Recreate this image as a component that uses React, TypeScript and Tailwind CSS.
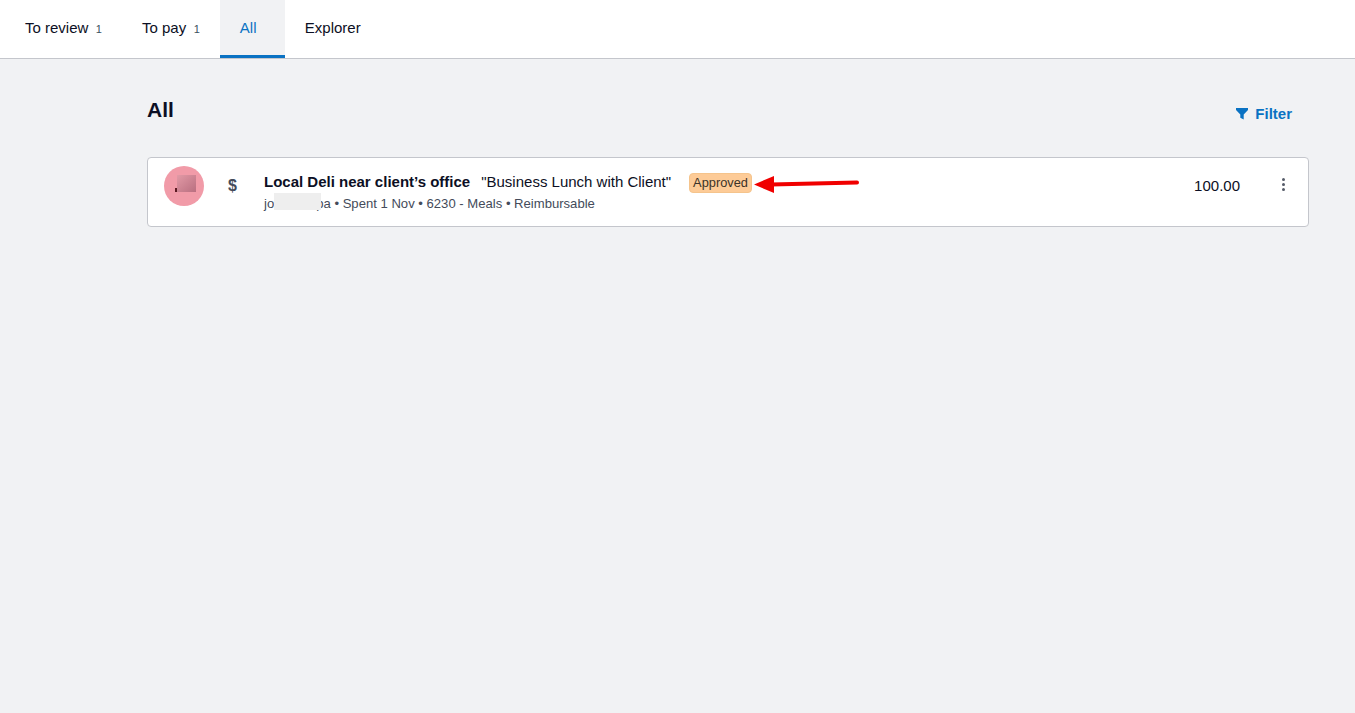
const tabs = [
  { label: 'To review', count: 1 },
  { label: 'To pay', count: 1 },
  { label: 'All', active: true },
  { label: 'Explorer' },
];

const TabBar = () => (
  <nav className="flex h-[59px] border-b border-[#c4c6cc] bg-white pl-[5px]">
    {tabs.map((tab) => (
      <a
        key={tab.label}
        href="#"
        className={
          tab.active
            ? 'flex h-[58px] w-[65px] items-center border-b-[3px] border-[#0a72c3] bg-[#f1f2f4] px-5 pt-[3px] text-[#0a72c3]'
            : 'flex h-[58px] items-center px-5 text-[#0c0f24]'
        }
      >
        <span className="-mt-[2px] text-[15px]">{tab.label}</span>
        {tab.count && <span className="ml-[7.5px] text-[11px] text-[#3a5160]">{tab.count}</span>}
      </a>
    ))}
  </nav>
);

const ExpenseCard = () => (
  <div className="relative flex h-[70px] items-start rounded border border-[#c4c6cc] bg-white">
    <div className="relative ml-4 mt-2 h-10 w-10 shrink-0 rounded-full bg-[#f19ba8]">
      <div className="absolute left-[13px] top-[9px] h-[17px] w-[19px] bg-gradient-to-br from-[#e29aa6] to-[#b96f80]" />
      <div className="absolute left-[11px] top-[22px] h-1 w-[2px] bg-[#5c1a22]" />
    </div>
    <span className="ml-[24px] mt-[18px] w-[9px] shrink-0 text-[16px] font-bold leading-5 text-[#444b5a]">$</span>
    <div className="ml-[27px] mt-[14px] flex-1">
      <div className="flex h-5 items-center text-[15px] text-[#0c0f24]">
        <span className="font-bold">Local Deli near client’s office</span>
        <span className="ml-[11px]">"Business Lunch with Client"</span>
        <span className="ml-[18px] mt-[2px] rounded-sm border border-[#f5c48c] bg-[#fdcb97] px-[3px] text-[12.8px] leading-[18px] text-[#3b3328]">
          Approved
        </span>
      </div>
      <div className="relative mt-1 text-[13.1px] leading-4 text-[#444b5a]">
        jo<span className="inline-block w-[42px]" />pa • Spent 1 Nov • 6230 - Meals • Reimbursable
        <div className="absolute left-[10px] top-[-3px] h-[17px] w-[47px] bg-[#eeeeee] blur-[0.5px]" />
      </div>
    </div>
    <span className="mr-[42px] mt-[17px] text-[15px] text-[#0c0f24]">100.00</span>
    <div className="mr-[23px] mt-[20px] flex flex-col gap-[2px]">
      <span className="h-[3px] w-[3px] rounded-full bg-[#555b68]" />
      <span className="h-[3px] w-[3px] rounded-full bg-[#555b68]" />
      <span className="h-[3px] w-[3px] rounded-full bg-[#555b68]" />
    </div>
    {/* red annotation arrow */}
    <svg className="absolute left-[603px] top-[15px]" width="110" height="22" viewBox="0 0 110 22">
      <path d="M3 11.5 L23 3 L23 20 Z" fill="#f00000" />
      <path d="M20 11.5 L106 9.5" stroke="#f00000" strokeWidth="4" strokeLinecap="round" />
    </svg>
  </div>
);

export default function App() {
  return (
    <div className="min-h-[713px] bg-[#f1f2f4] font-['Liberation_Sans',Arial,sans-serif]">
      <TabBar />
      <main className="pl-[147px] pr-[46px]">
        <div className="flex h-[98px] items-start justify-between">
          <h1 className="mt-[39px] text-[21px] font-bold leading-6 text-[#0c0f24]">All</h1>
          <button className="mr-[17px] mt-[46px] flex items-center gap-[7px] text-[15px] font-bold leading-[18px] text-[#0a72c3]">
            <svg width="12" height="12" viewBox="0 0 12 12">
              <path d="M0 0 H12 V2 L7.7 6.5 V11.5 L4.3 9.8 V6.5 L0 2 Z" fill="#0a72c3" />
            </svg>
            Filter
          </button>
        </div>
        <ExpenseCard />
      </main>
    </div>
  );
}
